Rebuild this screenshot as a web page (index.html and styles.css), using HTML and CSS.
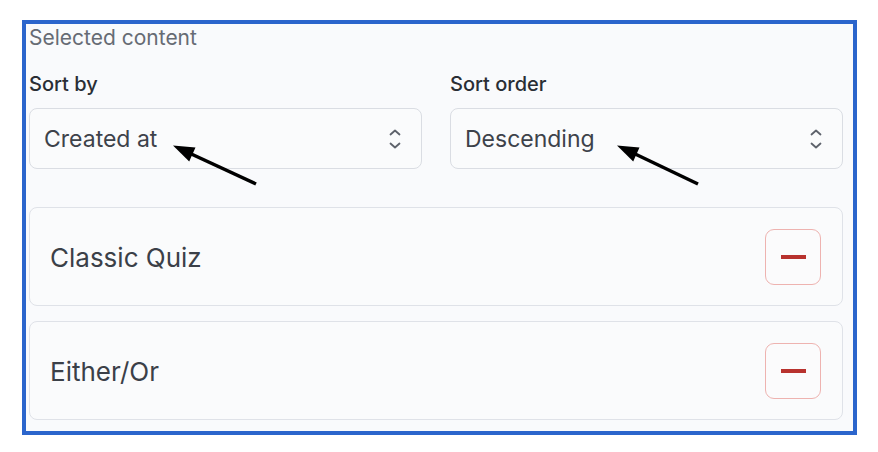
FILE: index.html
```html
<!DOCTYPE html>
<html lang="en">
<head>
  <meta charset="UTF-8">
  <meta name="viewport" content="width=device-width, initial-scale=1.0">
  <title>Selected content</title>
  <link rel="stylesheet" href="styles.css">
</head>
<body>
  <div class="panel">
    <div class="panel-title">Selected content</div>

    <div class="sort-row">
      <div class="field">
        <label class="field-label">Sort by</label>
        <div class="select">
          <span class="select-value">Created at</span>
          <svg class="select-icon" width="14" height="22" viewBox="0 0 14 22">
            <path d="M2.5 6.5 L7 2.5 L11.5 6.5" />
            <path d="M2.5 15.5 L7 19.5 L11.5 15.5" />
          </svg>
        </div>
        <svg class="arrow arrow-left" width="100" height="56" viewBox="0 0 100 56">
          <line x1="87" y1="46" x2="18" y2="14" />
          <polygon points="4,7.5 20.2,23.5 26.5,9.6" />
        </svg>
      </div>

      <div class="field">
        <label class="field-label">Sort order</label>
        <div class="select">
          <span class="select-value">Descending</span>
          <svg class="select-icon" width="14" height="22" viewBox="0 0 14 22">
            <path d="M2.5 6.5 L7 2.5 L11.5 6.5" />
            <path d="M2.5 15.5 L7 19.5 L11.5 15.5" />
          </svg>
        </div>
        <svg class="arrow arrow-right" width="100" height="56" viewBox="0 0 100 56">
          <line x1="85" y1="46" x2="18" y2="14" />
          <polygon points="4,7.5 20.2,23.5 26.5,9.6" />
        </svg>
      </div>
    </div>

    <div class="content-list">
      <div class="content-item">
        <span class="content-name">Classic Quiz</span>
        <button class="remove-btn" type="button" aria-label="Remove"><span class="minus"></span></button>
      </div>
      <div class="content-item">
        <span class="content-name">Either/Or</span>
        <button class="remove-btn" type="button" aria-label="Remove"><span class="minus"></span></button>
      </div>
    </div>
  </div>
</body>
</html>
```

FILE: styles.css
```css
body {
  margin: 0;
  background-color: #ffffff;
  font-family: Inter, "Noto Sans", sans-serif;
}
.panel {
  box-sizing: border-box;
  width: 835px;
  height: 415px;
  margin: 20px 0 0 22px;
  padding: 2px 10px 0 3px;
  border: 4px solid #2b65cc;
  background-color: #f9fafc;
}
.panel-title {
  font-size: 21px;
  line-height: 24px;
  color: #666b74;
}
.sort-row {
  display: grid;
  grid-template-columns: 1fr 1fr;
  column-gap: 28px;
  margin-top: 22px;
}
.field {
  position: relative;
}
.field-label {
  display: block;
  font-size: 20px;
  font-weight: 500;
  line-height: 24px;
  color: #2a2e35;
  margin-bottom: 12px;
}
.select {
  box-sizing: border-box;
  height: 61px;
  display: flex;
  align-items: center;
  justify-content: space-between;
  padding: 0 19px 0 14px;
  border: 1px solid #dadde3;
  border-radius: 8px;
  background-color: #fafbfc;
}
.select-value {
  font-size: 23px;
  color: #3d424a;
}
.select-icon path {
  fill: none;
  stroke: #5d626b;
  stroke-width: 1.8;
  stroke-linecap: round;
  stroke-linejoin: round;
}
.arrow {
  position: absolute;
  top: 66px;
}
.arrow-left {
  left: 140px;
}
.arrow-right {
  left: 163px;
}
.arrow line {
  stroke: #000000;
  stroke-width: 3.5;
}
.arrow polygon {
  fill: #000000;
}
.content-list {
  display: flex;
  flex-direction: column;
  gap: 15px;
  margin-top: 38px;
}
.content-item {
  box-sizing: border-box;
  height: 99px;
  display: flex;
  align-items: center;
  justify-content: space-between;
  padding: 1px 21px 0 20px;
  border: 1px solid #dfe2e8;
  border-radius: 8px;
  background-color: #fafbfc;
}
.content-name {
  font-size: 26px;
  color: #3b4048;
}
.remove-btn {
  width: 56px;
  height: 56px;
  display: flex;
  align-items: center;
  justify-content: center;
  padding: 0;
  border: 1.5px solid #eeb3b0;
  border-radius: 9px;
  background-color: #fbfbfc;
}
.minus {
  width: 25px;
  height: 3.5px;
  background-color: #b8322e;
}
```
